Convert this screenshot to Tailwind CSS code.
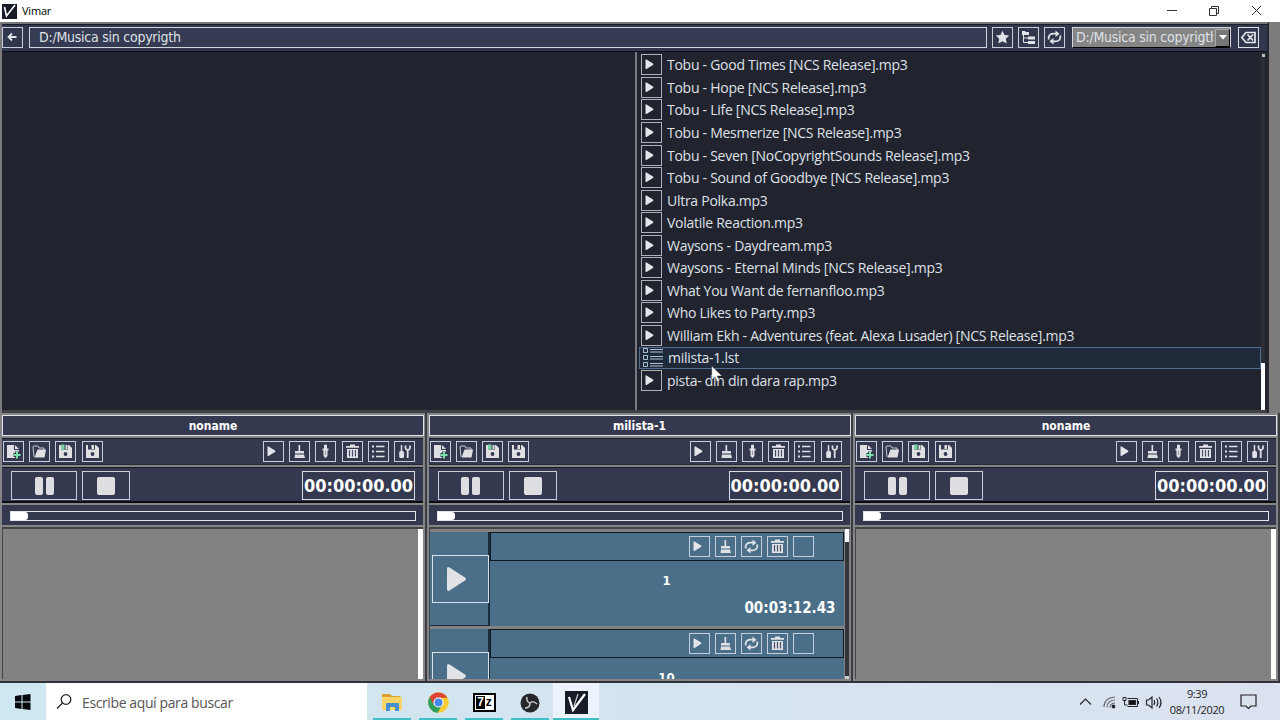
<!DOCTYPE html>
<html lang="es">

<head>
    <meta charset="UTF-8">
    <meta name="viewport" content="width=device-width, initial-scale=1.0">
    <title>Vimar</title>
    <script src="https://cdn.jsdelivr.net/npm/@tailwindcss/browser@4"></script>
</head>

<body class="w-[1280px] h-[720px] overflow-hidden bg-[#7d7b7b] font-['Open_Sans','Noto_Sans',sans-serif] text-[#dfe1e6]">
    <!-- iconos compartidos -->
    <svg class="hidden">
        <symbol id="play" viewBox="0 0 21 21"><path d="M4.500 6q0-1 1-.5l6.500 4q.9.7 0 1.400l-6.500 4q-1 .5-1-.6z" fill="#e4e5ea" /></symbol>
        <symbol id="new" viewBox="0 0 21 21">
            <path d="M4 4h7v5h5v8H4zM12 4l4 4h-4z" fill="#dfdfe3" />
            <path d="M14 10.500v7M10.500 14h7" stroke="#34394f" stroke-width="4" />
            <path d="M14 10.500v7M10.500 14h7" stroke="#7ce0ac" stroke-width="2" />
        </symbol>
        <symbol id="open" viewBox="0 0 21 21">
            <path d="M5 16L4 6q0-1 1-1h4l1 2h5v2" fill="none" stroke="#c8c9cf" />
            <path d="M8.500 8.500h8.500l-1.500 8H5.500z" fill="#e0e0e3" />
        </symbol>
        <symbol id="saveas" viewBox="0 0 21 21">
            <path d="M4 4h10l3 3v10H4z" fill="#e0e0e3" />
            <path d="M6 3.500h7v5H6z" fill="#34394f" />
            <path d="M6 3.500h3.500v5H6z" fill="#78d5a7" />
            <path d="M10.500 4h2v4h-2z" fill="#e0e0e3" />
            <circle cx="10.500" cy="13" r="1.900" fill="#34394f" />
        </symbol>
        <symbol id="save" viewBox="0 0 21 21">
            <path d="M4 4h10l3 3v10H4z" fill="#e0e0e3" />
            <path d="M6 3.500h7v5H6z" fill="#34394f" />
            <path d="M9.500 4h2.500v4H9.500z" fill="#e0e0e3" />
            <circle cx="10.500" cy="13" r="1.900" fill="#34394f" />
        </symbol>
        <symbol id="broom" viewBox="0 0 21 21">
            <path d="M9.500 4h1.700v6H9.500zM6 10h9v2.500H6zM6 13.500h9l1 3.500H5.500z" fill="#dedfe4" />
        </symbol>
        <symbol id="pin" viewBox="0 0 21 21">
            <path d="M9 4q1.500-1 3 0v3.500h1.500v2h-1V15l-2 2-2-2V9.500h-1v-2H9z" fill="#dedfe4" />
            <path d="M10.500 10v4" stroke="#9a9eab" />
        </symbol>
        <symbol id="trash" viewBox="0 0 21 21">
            <path d="M8 3.500h5v1.500h4v1.800H4V5h4zM5 8h11v9H5z" fill="#e2e3e8" />
            <path d="M7.500 9v6.500M10.500 9v6.500M13.500 9v6.500" stroke="#474d65" stroke-width="1.200" />
        </symbol>
        <symbol id="list" viewBox="0 0 21 21">
            <path d="M4 5.500h2M4 10.500h2M4 15.500h2" stroke="#e0e1e6" stroke-width="2" />
            <path d="M8 5.500h8.500M8 10.500h8.500M8 15.500h8.500" stroke="#e0e1e6" stroke-width="1.600" />
        </symbol>
        <symbol id="tools" viewBox="0 0 21 21">
            <path d="M7.500 4v7" stroke="#dedfe4" stroke-width="1.500" />
            <rect x="5.200" y="10" width="4.800" height="7" rx="1.500" fill="#e0e1e6" />
            <path d="M11.500 4.500v2.500q0 1.500 2.200 2v8M16 4.500v2.500q0 1.500-2.200 2" fill="none" stroke="#dedfe4" stroke-width="1.800" />
        </symbol>
        <symbol id="loop" viewBox="0 0 21 21">
            <path d="M4.700 12.500q-.7-5.500 4.500-5.800h3M16.300 8.500q.7 5.500-4.500 5.800h-3" fill="none" stroke="#dfe2e8" stroke-width="1.800" />
            <path d="M11.500 3.500l4 3.200-4 3.300zM9.500 11v6.500l-4-3.200z" fill="#dfe2e8" />
        </symbol>
    </svg>

    <!-- barra de título -->
    <header class="flex h-[22px] items-center bg-white text-black">
        <svg class="ml-[2px] size-[15px]" viewBox="0 0 15 15"><path d="M0 0h15v15H0z" fill="#181b28" /><path d="M2.500 3l2 9L13 1" fill="none" stroke="#fff" stroke-width="1.600" /></svg>
        <span class="ml-[5px] text-[11px] tracking-[-0.2px]">Vimar</span>
        <svg class="ml-auto mr-[15px] h-[14px] w-[100px]" viewBox="0 0 100 14" fill="none" stroke="#333">
            <path d="M2 6.500h10M44.500 4.500h7v7h-7zM46.500 4.500v-2h7v7h-2M87 2l9 9M96 2l-9 9" />
        </svg>
    </header>

    <!-- explorador de archivos -->
    <section class="flex h-[391px] w-[1269px] flex-col border-t-2 border-r-2 border-l-2 border-t-[#77787b] border-r-[#25262e] border-l-[#7b7b7d] bg-[#21242f]">
        <div class="flex h-[28px] shrink-0 items-center border-y border-t-[#1b1e29] border-b-[#0c0e17] bg-[#31374c] pb-px font-['DejaVu_Sans_Condensed','DejaVu_Sans',sans-serif] [font-stretch:75%]">
            <button class="flex size-[21px] items-center justify-center border border-[#c8ced9]">
                <svg class="size-[15px]" viewBox="0 0 15 15" fill="none" stroke="#dfe2e8" stroke-width="1.800"><path d="M11.500 7H3.500M7 3.500L3.500 7 7 10.500" /></svg>
            </button>
            <div class="ml-[6px] flex h-[21px] w-[958px] items-center border border-[#d0d5de] bg-[#343b52] pl-[9px] text-[14px]"><span class="tracking-[-0.25px]">D:/Musica sin copyrigth</span></div>
            <button class="ml-[5px] size-[21px] border border-[#c8ced9]">
                <svg class="size-[19px]" viewBox="0 0 19 19"><path d="M9.500 2.800l2 4.200 4.700.6-3.400 3.200.9 4.700-4.200-2.300-4.200 2.300.9-4.700-3.400-3.200 4.700-.6z" fill="#e0e2e8" /></svg>
            </button>
            <button class="ml-[5px] size-[21px] border border-[#c8ced9]">
                <svg class="size-[19px]" viewBox="0 0 19 19"><path d="M3 3h3l1 1h3v3H3zM9 8.500h7v3H9zM9 13h7v3H9z" fill="#e0e2e8" /><path d="M4.500 7v7.500H9M4.500 10H9" fill="none" stroke="#e0e2e8" /></svg>
            </button>
            <button class="ml-[5px] size-[21px] border border-[#c8ced9]"><svg class="-m-px size-[21px]"><use href="#loop" /></svg></button>
            <div class="ml-[7px] flex h-[21px] w-[159px] items-center overflow-hidden border border-[#d5d8dc] border-b-black bg-[#858585] pl-[3px] text-[14px]">
                <div class="h-[17px] w-[137px] overflow-hidden whitespace-nowrap leading-[17px] tracking-[-0.25px]">D:/Musica sin copyrigth</div>
                <div class="ml-auto flex h-[18px] w-[15px] items-center justify-center border border-t-[#aaa] border-r-black border-b-black border-l-[#aaa] bg-[#777]">
                    <svg class="h-[5px] w-[8px]" viewBox="0 0 8 5"><path d="M0 0h8L4 4.500z" fill="#fff" /></svg>
                </div>
            </div>
            <button class="ml-[7px] size-[21px] border border-[#dce2ea]">
                <svg class="size-[19px]" viewBox="0 0 19 19" fill="none" stroke="#e6e8ee" stroke-width="1.700"><path d="M2.800 9.500l4.200-5h9v10H7zM8.500 6.500l5.500 6M14 6.500l-5.500 6" /></svg>
            </button>
        </div>
        <div class="flex h-[358px]">
            <div class="w-[635px] border-r-2 border-r-[#777a80]"></div>
            <ul id="files" class="w-[624px] pt-[1.600px] pl-[2px] text-[14px]"></ul>
            <div class="flex w-[4px] flex-col items-center justify-between bg-[#2c2e36] pt-[2px]">
                <div class="size-[3px] bg-[#b8bbc0]"></div>
                <div class="h-[47px] w-[4px] bg-white"></div>
            </div>
        </div>
        <div class="h-[3px] shrink-0 bg-[#3f4147]"></div>
    </section>

    <!-- reproductores -->
    <section class="flex h-[268px] gap-x-[2px] bg-[#3c3d43]" id="players"></section>
    <div class="h-[2px] bg-[#303039]"></div>

    <!-- barra de tareas -->
    <footer class="flex h-[37px] bg-gradient-to-r from-[#cee7f0] to-[#dbe2ef] text-[#222]">
        <div class="flex w-[46px] items-center justify-center">
            <svg class="size-[16px]" viewBox="0 0 16 16"><path d="M0 2l6.500-1v6.500H0zM7.500.9L15.500 0v7.500h-8zM0 8.500h6.500V15L0 14zM7.500 8.500h8V16l-8-1z" fill="#05080b" /></svg>
        </div>
        <div class="flex w-[321px] items-center bg-white">
            <svg class="ml-[10px] size-[17px]" viewBox="0 0 17 17" fill="none" stroke="#222" stroke-width="1.300"><circle cx="10" cy="6.500" r="4.800" /><path d="M6.500 10L1 15.500" /></svg>
            <span class="mt-px ml-[9px] text-[14px] tracking-[-0.390px] text-[#555]">Escribe aquí para buscar</span>
        </div>
        <div class="ml-[2px] flex">
            <div class="flex w-[46px] flex-col items-center justify-between pt-[10px]">
                <svg class="h-[20px] w-[22px]" viewBox="0 0 22 20"><path d="M1 1h8l2 2h8v4H1z" fill="#dba128" /><path d="M1 4h20v13H1z" fill="#fbd568" /><path d="M5 18v-7q0-1 1-1h11q1 0 1 1v7h-4v-4H9v4z" fill="#438fd0" /></svg>
                <div class="h-[2px] w-[38px] bg-[#3fc0c8]"></div>
            </div>
            <div class="flex w-[46px] flex-col items-center justify-between pt-[9px]">
                <svg class="size-[21px]" viewBox="0 0 21 21"><circle cx="10.500" cy="10.500" r="10.300" fill="#f9ca36" /><path d="M10.500 10.500L1.600 5.300A10.300 10.300 0 0 0 9.700 20.800L14 13z" fill="#2f9f57" /><path d="M1.600 5.300A10.300 10.300 0 0 1 19.400 5.800H10.500L6 13z" fill="#dc4335" /><circle cx="10.500" cy="10.500" r="5.100" fill="#fff" /><circle cx="10.500" cy="10.500" r="4" fill="#4388ec" /></svg>
                <div class="h-[2px] w-[38px] bg-[#3fc0c8]"></div>
            </div>
            <div class="flex w-[46px] flex-col items-center justify-between pt-[10px]">
                <div class="flex h-[19px] w-[23px] items-center justify-center border-2 border-black bg-white font-['Liberation_Sans',sans-serif] text-[12px] leading-[13px] font-bold text-black">
                    <span class="h-[13px] bg-black px-px text-white">7</span><span class="h-[13px] pl-px">z</span>
                </div>
                <div class="h-[2px] w-[38px] bg-[#3fc0c8]"></div>
            </div>
            <div class="flex w-[46px] flex-col items-center justify-between pt-[10px]">
                <svg class="size-[20px]" viewBox="0 0 20 20"><circle cx="10" cy="10" r="9.500" fill="#25272a" /><path d="M10 10q-4-1-3-6M10 10q3-3 7 1M10 10q0 5-5 5" fill="none" stroke="#c9ccd0" stroke-width="1.500" /></svg>
                <div class="h-[2px] w-[38px] bg-[#3fc0c8]"></div>
            </div>
            <div class="flex w-[46px] flex-col items-center justify-between bg-[#edf3fa] pt-[8px]">
                <svg class="size-[23px]" viewBox="0 0 23 23"><path d="M0 0h23v23H0z" fill="#181c28" /><path d="M4 6l4 13L20 3" fill="none" stroke="#fff" stroke-width="2.200" /><path d="M13 3L9 15" stroke="#ccc" stroke-width="1.200" /></svg>
                <div class="h-[2px] w-[46px] bg-[#3fc0c8]"></div>
            </div>
        </div>
        <div class="ml-auto flex items-center">
            <svg class="h-[20px] w-[86px]" viewBox="0 0 86 20" fill="none" stroke="#25282e" stroke-width="1.200">
                <path d="M2 12.500L7.500 7l5.500 5.500" />
                <path d="M26 15Q26 6 37 5M29 15.500q0-7 8-7.500M32 15.500q0-4 5-4.500" stroke="#666b73" />
                <circle cx="35.500" cy="14.500" r="1.300" fill="#25282e" />
                <path d="M51 8.500h6.500v4H51z" fill="#111" /><path d="M49.500 6.500h10v8h-10M60.500 9v3M45 5.500h3v3h-3zM46.500 9v4h3" stroke-width="1" />
                <path d="M68.500 8h2l3.500-3v11l-3.500-3h-2zM76 8q1.500 2.500 0 5M78.500 6.500q2.800 4 0 8M81 5q4 5.500 0 11" />
            </svg>
            <div class="ml-[3px] w-[60px] text-center text-[11px] leading-[16px] tracking-[-0.400px] whitespace-nowrap"><div>9:39</div><div>08/11/2020</div></div>
            <svg class="mr-[23px] ml-[13px] h-[17px] w-[17px]" viewBox="0 0 17 17" fill="none" stroke="#222" stroke-width="1.200"><path d="M1 2h15v11h-5l-2.500 2.500L6 13H1z" /></svg>
        </div>
    </footer>

    <!-- puntero del ratón -->
    <svg class="absolute top-[365px] left-[711px] h-[20px] w-[13px]" viewBox="0 0 13 20"><path d="M.7 1v14l3.300-3 2.300 5 2.200-1-2.200-5h4.700z" fill="#fff" stroke="#222" stroke-width=".4" /></svg>

    <script>
        const files = [
            'Tobu - Good Times [NCS Release].mp3',
            'Tobu - Hope [NCS Release].mp3',
            'Tobu - Life [NCS Release].mp3',
            'Tobu - Mesmerize [NCS Release].mp3',
            'Tobu - Seven [NoCopyrightSounds Release].mp3',
            'Tobu - Sound of Goodbye [NCS Release].mp3',
            'Ultra Polka.mp3',
            'Volatile Reaction.mp3',
            'Waysons - Daydream.mp3',
            'Waysons - Eternal Minds [NCS Release].mp3',
            'What You Want de fernanfloo.mp3',
            'Who Likes to Party.mp3',
            'William Ekh - Adventures (feat. Alexa Lusader) [NCS Release].mp3',
            'milista-1.lst',
            'pista- din din dara rap.mp3'
        ];

        document.getElementById('files').innerHTML = files.map(name => name.endsWith('.lst')
            ? `<li class="flex h-[22.550px] items-center border border-[#4d6d91] bg-[#20293a] pl-[2px]">
                <svg class="h-[21px] w-[22px]" viewBox="0 0 22 21" fill="none" stroke="#a9c2d5"><path d="M1.500 1.500h4v4h-4zM1.500 8.500h4v4h-4zM1.500 15.500h4v4h-4zM8 2.500h13M8 5h13M8 9.500h13M8 12h13M8 16.500h13M8 19h13" /></svg>
                <span class="ml-[4px] tracking-[-0.270px]">${name}</span></li>`
            : `<li class="flex h-[22.550px] items-center pl-[2px]">
                <span class="size-[21px] border border-[#aeb1b7]"><svg class="-m-px size-[21px]"><use href="#play" /></svg></span>
                <span class="ml-[5px] tracking-[-0.270px]">${name}</span></li>`).join('');

        // botón cuadrado de 21px
        const btn = id => `<button class="size-[21px] shrink-0 border border-[#c7cedb]">${id ? `<svg class="-m-px size-[21px]"><use href="#${id}" /></svg>` : ''}</button>`;

        const track = (n, time) => `
            <div class="flex h-[94px] shrink-0 bg-[#4b6f89]">
                <div class="flex w-[60px] flex-col border-r-2 border-b border-[#1b2c3b] pt-[23px] pl-[2px]">
                    <button class="h-[48px] w-[57px] border border-[#d5e4ee]">
                        <svg class="ml-[12px] h-[26px] w-[24px]" viewBox="0 0 24 26"><path d="M2 3q0-3 2.500-1.500L20 11.500q2 1.500 0 3L4.500 24.500Q2 26 2 23z" fill="#e0e2e6" /></svg>
                    </button>
                </div>
                <div class="flex flex-1 flex-col font-bold text-white">
                    <div class="flex h-[29px] items-center gap-[5.200px] border-y border-r border-l border-[#101820] pb-px pl-[198px]">${btn('play')}${btn('broom')}${btn('loop')}${btn('trash')}${btn('')}</div>
                    <div class="mt-[12px] text-center text-[13px] leading-[16px]">${n}</div>
                    <div class="mt-[9px] pr-[8px] text-right text-[15px] leading-[20px]">${time}</div>
                </div>
            </div>`;

        const player = (title, tracks) => `
            <div class="flex w-[424.500px] shrink-0 flex-col gap-[2px] border-t-2 border-l-2 border-[#85858a] bg-[#858586] font-['DejaVu_Sans_Condensed','DejaVu_Sans',sans-serif] [font-stretch:75%]">
                <div class="flex h-[21px] w-[422px] items-center justify-center border border-[#e2e3e7] bg-[#343950] text-[12px] font-bold text-white">${title}</div>
                <div class="flex h-[27px] w-[421px] items-center gap-[5.200px] border-t border-b border-t-[#181b27] border-b-[#252938] bg-[#343950] pr-[8px] pl-px">
                    ${btn('new')}${btn('open')}${btn('saveas')}${btn('save')}
                    <div class="ml-auto flex gap-[5.200px]">${btn('play')}${btn('broom')}${btn('pin')}${btn('trash')}${btn('list')}${btn('tools')}</div>
                </div>
                <div class="flex h-[36px] w-[421px] items-center border-t border-b-2 border-t-[#181b27] border-b-[#0b0d15] bg-[#343950] pt-[2px] pr-[8px] pl-[9px]">
                    <button class="flex h-[29px] w-[66px] items-center justify-center gap-[3px] border border-[#c7cedb]"><i class="h-[18px] w-[8px] rounded-[2px] bg-[#dedee2]"></i><i class="h-[18px] w-[8px] rounded-[2px] bg-[#dedee2]"></i></button>
                    <button class="ml-[5px] flex h-[29px] w-[48px] items-center justify-center border border-[#c7cedb]"><i class="size-[18px] rounded-[2px] bg-[#dedee2]"></i></button>
                    <div class="ml-auto flex h-[29px] w-[113px] items-center justify-center border border-[#d8dce4] text-[18px] font-bold text-white">00:00:00.00</div>
                </div>
                <div class="flex h-[20px] w-[421px] items-center bg-[#343950] pt-px pl-[8px]">
                    <div class="h-[10px] w-[406px] border border-[#e0e4eb]"><div class="h-[8px] w-[17px] rounded-r-[3px] bg-white"></div></div>
                </div>
                <div class="flex h-[152px] w-[421px] overflow-hidden border-t-2 border-l border-[#434448] bg-[#828282]">
                    ${tracks ? `<div class="flex w-[414px] flex-col gap-[3px] pt-[3px]">${tracks}</div>
                    <div class="ml-px flex w-[4px] flex-col justify-between bg-[#34353a]"><div class="h-[13px] bg-white"></div><div class="h-[3px] bg-[#ccc]"></div></div>`
                    : `<div class="ml-auto w-[5px] bg-white"></div>`}
                </div>
            </div>`;

        document.getElementById('players').innerHTML =
            player('noname', '') + player('milista-1', track('1', '00:03:12.43') + track('10', '00:00:00.00')) + player('noname', '');
    </script>
</body>

</html>
